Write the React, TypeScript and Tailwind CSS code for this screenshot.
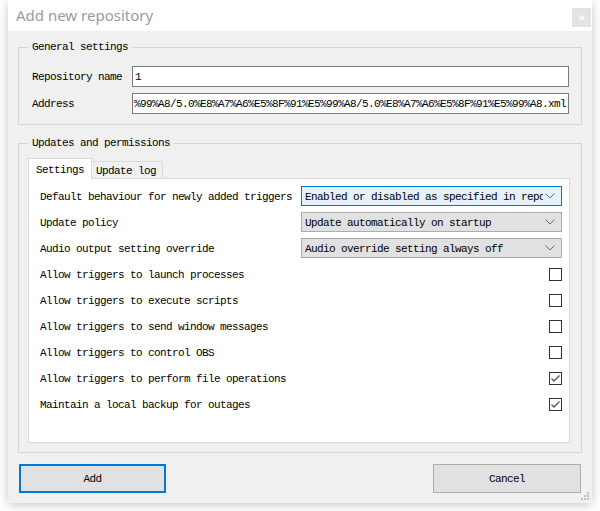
import React from "react";

const mono = { fontFamily: '"Liberation Mono", "DejaVu Sans Mono", monospace' };

function Chevron() {
  return (
    <svg width="10" height="6" viewBox="0 0 10 6" className="shrink-0">
      <polyline points="0.5,0.5 5,5 9.5,0.5" fill="none" stroke="#6d6d6d" strokeWidth="1" />
    </svg>
  );
}

function Combo({ text, focused }: { text: string; focused?: boolean }) {
  return (
    <div
      className={
        "w-[261px] h-[20px] flex items-center pl-[3px] pr-[4px] border " +
        (focused ? "border-[#0078d7] bg-[#e5f1fb]" : "border-[#adadad] bg-[#e1e1e1]")
      }
    >
      <div className="flex-1 overflow-hidden whitespace-nowrap text-black pt-[1px]">{text}</div>
      <div className="w-[14px] flex justify-center bg-inherit">
        <Chevron />
      </div>
    </div>
  );
}

function Check({ checked }: { checked?: boolean }) {
  return (
    <div className="w-[13px] h-[13px] border border-[#333333] bg-white flex items-center justify-center">
      {checked && (
        <svg width="11" height="11" viewBox="0 0 11 11">
          <polyline points="1.5,5.5 4,8 9.5,2.5" fill="none" stroke="#555555" strokeWidth="1.4" />
        </svg>
      )}
    </div>
  );
}

export default function App() {
  const rows: { label: string; combo?: string; focused?: boolean; check?: boolean }[] = [
    { label: "Default behaviour for newly added triggers", combo: "Enabled or disabled as specified in repository", focused: true },
    { label: "Update policy", combo: "Update automatically on startup" },
    { label: "Audio output setting override", combo: "Audio override setting always off" },
    { label: "Allow triggers to launch processes", check: false },
    { label: "Allow triggers to execute scripts", check: false },
    { label: "Allow triggers to send window messages", check: false },
    { label: "Allow triggers to control OBS", check: false },
    { label: "Allow triggers to perform file operations", check: true },
    { label: "Maintain a local backup for outages", check: true },
  ];

  return (
    <div className="w-[600px] h-[511px] bg-white overflow-hidden">
      <div
        className="relative ml-[8px] w-[584px] h-[503px] bg-[#f0f0f0] flex flex-col shadow-[0_2px_10px_rgba(0,0,0,0.22)] text-[11px] tracking-[-0.6px] leading-[12px] text-black"
        style={mono}
      >
        {/* Title bar */}
        <div className="h-[31px] bg-white flex items-start justify-between pl-[8px] pr-[1px] shrink-0">
          <div
            className="mt-[5px] text-[15px] leading-[20px] tracking-normal text-[#9b9b9b]"
            style={{ fontFamily: '"Noto Sans", "Open Sans", sans-serif' }}
          >
            Add new repository
          </div>
          <div className="mt-[8px] w-[19px] h-[19px] bg-[#e3e3e3] flex items-center justify-center">
            <svg width="6" height="6" viewBox="0 0 6 6">
              <path d="M0.5 0.5 L5.5 5.5 M5.5 0.5 L0.5 5.5" stroke="#ffffff" strokeWidth="1.2" />
            </svg>
          </div>
        </div>

        {/* General settings */}
        <fieldset className="mt-[10px] mx-[10px] border border-[#d5d5d5] p-0 m-0">
          <legend className="ml-[9px] px-[4px] leading-[12px]">General settings</legend>
          <div className="pt-[13px] pb-[10px] pl-[13px] pr-[12px] flex flex-col gap-[6px]">
            <div className="flex items-center">
              <div className="w-[100px] pt-[1px]">Repository name</div>
              <div className="flex-1 h-[21px] border border-[#7a7a7a] bg-white flex items-center pl-[2px] pt-[1px]">1</div>
            </div>
            <div className="flex items-center">
              <div className="w-[100px] pt-[1px]">Address</div>
              <div className="flex-1 h-[21px] border border-[#7a7a7a] bg-white flex items-center justify-end pr-[2px] pt-[1px] overflow-hidden whitespace-nowrap">
                %99%A8/5.0%E8%A7%A6%E5%8F%91%E5%99%A8/5.0%E8%A7%A6%E5%8F%91%E5%99%A8.xml
              </div>
            </div>
          </div>
        </fieldset>

        {/* Updates and permissions */}
        <fieldset className="mt-[12px] mx-[10px] border border-[#d5d5d5] p-0 m-0">
          <legend className="ml-[9px] px-[4px] leading-[12px]">Updates and permissions</legend>
          <div className="pt-[9px] pb-[9px] pl-[9px] pr-[11px] flex flex-col">
            {/* Tabs */}
            <div className="flex items-end h-[20px]">
              <div className="relative z-10 -mb-px h-[21px] bg-white border border-b-0 border-[#d9d9d9] px-[7px] pt-[2px] flex items-center">
                Settings
              </div>
              <div className="h-[17px] bg-[#f0f0f0] border-t border-r border-[#d9d9d9] pl-[4px] pr-[6px] pt-[2px] flex items-center">
                Update log
              </div>
            </div>
            {/* Pane */}
            <div className="h-[265px] bg-white border border-[#d9d9d9] pt-[7px] pl-[11px] pr-[7px] flex flex-col gap-[6px]">
              {rows.map((r) => (
                <div key={r.label} className="h-[20px] flex items-center justify-between">
                  <div className="whitespace-nowrap pt-[1px]">{r.label}</div>
                  {r.combo !== undefined ? <Combo text={r.combo} focused={r.focused} /> : <Check checked={r.check} />}
                </div>
              ))}
            </div>
          </div>
        </fieldset>

        {/* Buttons */}
        <div className="mt-[11px] px-[11px] flex justify-between">
          <div className="w-[147px] h-[29px] border-2 border-[#0078d7] bg-[#e1e1e1] flex items-center justify-center pt-[1px]">
            Add
          </div>
          <div className="w-[148px] h-[29px] border border-[#adadad] bg-[#e1e1e1] flex items-center justify-center pt-[1px]">
            Cancel
          </div>
        </div>

        {/* Size grip */}
        <svg className="absolute right-[3px] bottom-[3px]" width="8" height="8" viewBox="0 0 8 8">
          <rect x="6" y="0" width="2" height="2" fill="#bdbdbd" />
          <rect x="3" y="3" width="2" height="2" fill="#bdbdbd" />
          <rect x="6" y="3" width="2" height="2" fill="#bdbdbd" />
          <rect x="0" y="6" width="2" height="2" fill="#bdbdbd" />
          <rect x="3" y="6" width="2" height="2" fill="#bdbdbd" />
          <rect x="6" y="6" width="2" height="2" fill="#bdbdbd" />
        </svg>
      </div>
    </div>
  );
}
